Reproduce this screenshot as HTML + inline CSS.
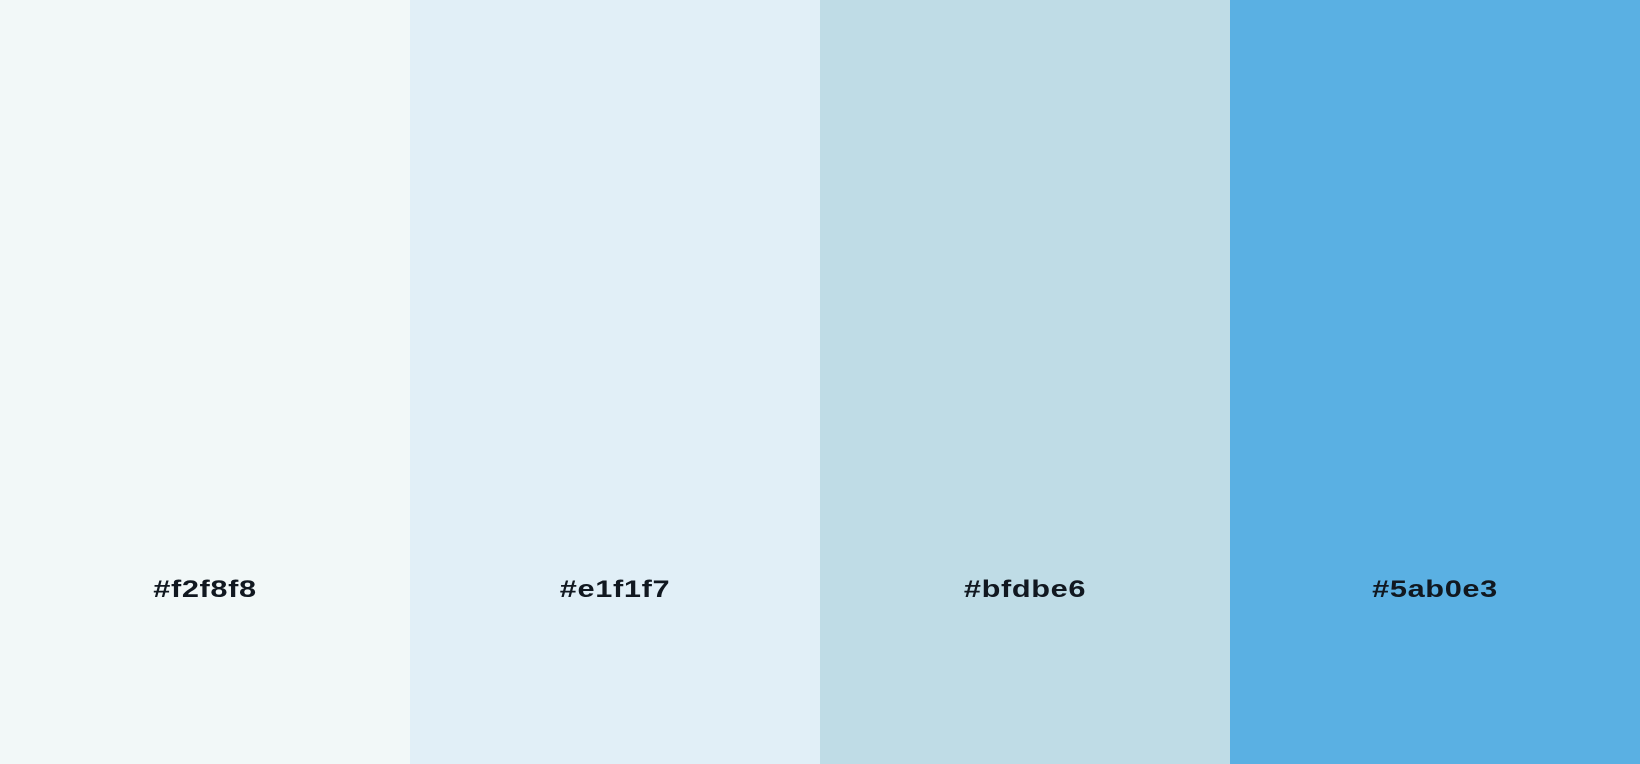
<!DOCTYPE html>
<html><head><style>
html,body{margin:0;padding:0;width:1640px;height:764px;overflow:hidden}
.row{display:flex;height:764px}
.c{width:410px;height:764px;position:relative}
.c span{position:absolute;left:0;right:0;top:576px;text-align:center;font-family:"Liberation Sans",sans-serif;font-size:24px;font-weight:bold;color:#111820;letter-spacing:0.5px;transform:scaleX(1.28);display:block}
</style></head><body>
<div class="row">
<div class="c" style="background:#f2f8f8"><span>#f2f8f8</span></div>
<div class="c" style="background:#e1eff7"><span>#e1f1f7</span></div>
<div class="c" style="background:#bfdce6"><span>#bfdbe6</span></div>
<div class="c" style="background:#5ab0e3"><span>#5ab0e3</span></div>
</div>
</body></html>
